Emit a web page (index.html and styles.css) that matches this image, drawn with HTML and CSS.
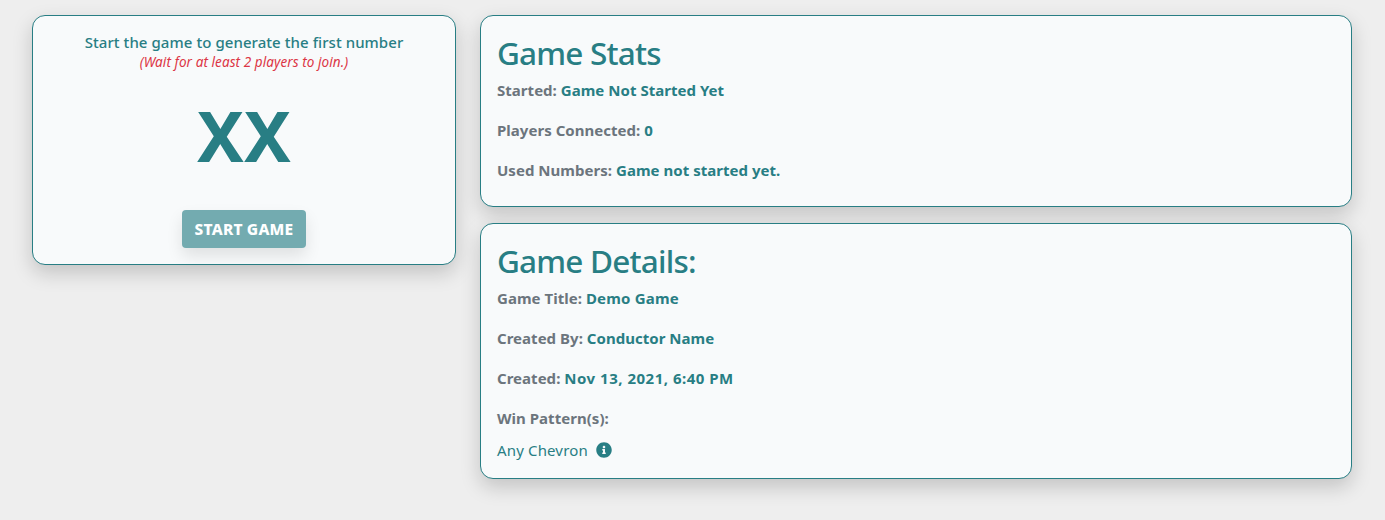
FILE: index.html
```html
<!DOCTYPE html>
<html lang="en">
<head>
<meta charset="utf-8">
<title>Game</title>
<link rel="stylesheet" href="styles.css">
</head>
<body>
<main class="layout">
  <section class="card draw">
    <h2 class="draw-title">Start the game to generate the first number</h2>
    <p class="draw-note">(Wait for at least 2 players to join.)</p>
    <div class="draw-number">XX</div>
    <button class="start" disabled>START GAME</button>
  </section>
  <div class="column">
    <section class="card stats">
      <h1>Game Stats</h1>
      <p class="row"><span class="label">Started:</span> <span class="value">Game Not Started Yet</span></p>
      <p class="row"><span class="label">Players Connected:</span> <span class="value">0</span></p>
      <p class="row"><span class="label">Used Numbers:</span> <span class="value">Game not started yet.</span></p>
    </section>
    <section class="card details">
      <h1>Game Details:</h1>
      <p class="row"><span class="label">Game Title:</span> <span class="value title">Demo Game</span></p>
      <p class="row"><span class="label">Created By:</span> <span class="value">Conductor Name</span></p>
      <p class="row"><span class="label">Created:</span> <span class="value date">Nov 13, 2021, 6:40 PM</span></p>
      <p class="row last"><span class="label">Win Pattern(s):</span></p>
      <p class="pattern"><span>Any Chevron</span>
        <svg class="info" viewBox="0 0 512 512"><path fill="currentColor" d="M256 8C119 8 8 119 8 256s111 248 248 248 248-111 248-248S393 8 256 8zm0 110c23.200 0 42 18.800 42 42s-18.800 42-42 42-42-18.800-42-42 18.800-42 42-42zm56 254c0 6.600-5.400 12-12 12h-88c-6.600 0-12-5.400-12-12v-24c0-6.600 5.400-12 12-12h12v-64h-12c-6.600 0-12-5.400-12-12v-24c0-6.600 5.400-12 12-12h64c6.600 0 12 5.400 12 12v100h12c6.600 0 12 5.400 12 12v24z"/></svg></p>
    </section>
  </div>
</main>
</body>
</html>
```
FILE: styles.css
```css
* { box-sizing: border-box; }
html { background: #eee; }
body { margin: 0; min-height: 100vh; background: #eee; font: 16px/24px "Noto Sans", "Open Sans", sans-serif; color: #287e84; }
h1, h2, p { margin: 0; }
.layout { display: grid; grid-template-columns: 424px 872px; gap: 24px; align-items: start; min-height: 100vh; padding: 15px 32px; }
.column { display: grid; gap: 16px; }
.card { background: #f8fafb; border: 1px solid #287e84; border-radius: 13px; box-shadow: 0 8px 20px rgba(0,0,0,.18); padding: 16px; white-space: nowrap; }
.draw { height: 250px; display: flex; flex-direction: column; align-items: center; }
.draw-title { font-size: 15px; line-height: 20px; font-weight: 500; letter-spacing: .06px; }
.draw-note { font-size: 13.5px; line-height: 20px; font-style: italic; font-weight: 400; letter-spacing: .08px; color: #dc3545; }
.draw-number { font-size: 70px; font-weight: 700; line-height: 98px; margin: 14px 0 26px; }
.start { width: 124px; height: 38px; padding: 0; border: 0; border-radius: 4px; background: #73abb0; color: #fff; font: 800 15.500px/24px "Noto Sans", sans-serif; letter-spacing: .2px; box-shadow: 0 8px 16px rgba(0,0,0,.1); }
.stats { height: 192px; }
.details { height: 256px; }
h1 { font-size: 31.5px; line-height: 38px; font-weight: 500; letter-spacing: -.8px; margin: 2px 0 6px; }
.row { height: 24px; margin-bottom: 16px; font-size: 15px; font-weight: 700; letter-spacing: .03px; }
.label { color: #6c757d; }
.title { letter-spacing: .2px; }
.date { letter-spacing: .5px; }
.last { margin-bottom: 8px; }
.pattern { display: flex; align-items: center; gap: 8px; font-size: 15px; font-weight: 400; letter-spacing: .15px; }
.info { width: 16px; height: 16px; }
```
